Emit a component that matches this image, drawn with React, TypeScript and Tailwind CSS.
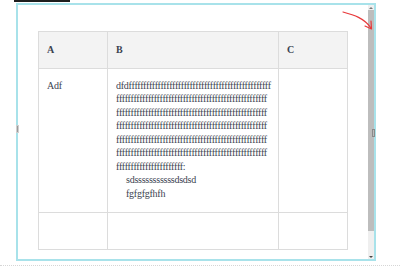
import React from "react";

const fLines = [
  "dfd" + "f".repeat(49),
  "f".repeat(52),
  "f".repeat(52),
  "f".repeat(52),
  "f".repeat(52),
  "f".repeat(52),
  "f".repeat(23) + ":",
];

export default function App() {
  return (
    <div
      className="relative w-[400px] h-[270px] bg-white overflow-hidden"
      style={{ fontFamily: '"Liberation Serif", "DejaVu Serif", serif' }}
    >
      {/* toolbar stub */}
      <div className="ml-[14px] w-[56px] h-[2px] bg-[#1e1e1e]" />

      {/* editor frame */}
      <div className="relative mt-[1px] ml-[16px] w-[360px] h-[258px] border-2 border-[#a8e2ea] flex">
        <div className="flex-1 pt-[26px] pl-[20px]">
          <table className="border-collapse text-[10px] leading-[13.5px] text-[#3b4350] tracking-[-0.25px]">
            <colgroup>
              <col className="w-[69px]" />
              <col className="w-[171px]" />
              <col className="w-[69px]" />
            </colgroup>
            <thead>
              <tr className="bg-[#f3f3f3]">
                <th className="border border-[#dcdcdc] px-[8px] py-[11px] text-left font-bold">A</th>
                <th className="border border-[#dcdcdc] px-[8px] py-[11px] text-left font-bold">B</th>
                <th className="border border-[#dcdcdc] px-[8px] py-[11px] text-left font-bold">C</th>
              </tr>
            </thead>
            <tbody>
              <tr>
                <td className="border border-[#dcdcdc] px-[8px] pt-[10px] pb-[12px] align-top">Adf</td>
                <td className="border border-[#dcdcdc] pl-[8px] pr-[6px] pt-[10px] pb-[12px] align-top">
                  {fLines.map((line, i) => (
                    <div key={i} className="whitespace-nowrap overflow-hidden">
                      {line}
                    </div>
                  ))}
                  <div className="pl-[10px]">sdsssssssssssdsdsd</div>
                  <div className="pl-[10px]">fgfgfgfhfh</div>
                </td>
                <td className="border border-[#dcdcdc] px-[8px] py-[11px] align-top" />
              </tr>
              <tr>
                <td className="border border-[#dcdcdc] px-[8px] py-[11px]">&nbsp;</td>
                <td className="border border-[#dcdcdc] px-[8px] py-[11px]" />
                <td className="border border-[#dcdcdc] px-[8px] py-[11px]" />
              </tr>
            </tbody>
          </table>
        </div>

        {/* vertical scrollbar */}
        <div className="w-[6px] flex flex-col bg-[#efefef]">
          <div className="h-[5px] flex items-center justify-center">
            <div className="w-0 h-0 border-l-[2px] border-r-[2px] border-b-[2px] border-l-transparent border-r-transparent border-b-[#777]" />
          </div>
          <div className="h-[221px] bg-[#bdbdbd]" />
          <div className="flex-1" />
          <div className="h-[5px] flex items-center justify-center">
            <div className="w-0 h-0 border-l-[2px] border-r-[2px] border-t-[2px] border-l-transparent border-r-transparent border-t-[#444]" />
          </div>
        </div>

        {/* resize handles */}
        <div className="absolute left-[-2px] top-[120px] w-[3px] h-[8px] bg-[#9a9a9a] border border-[#cfcfcf]" />
        <div className="absolute right-[-1px] top-[124px] w-[3px] h-[8px] bg-[#bcbcbc] border border-[#8a8a8a]" />
      </div>

      {/* dotted rule */}
      <div className="mt-[4px] border-t border-dotted border-[#d6d6d6]" />

      {/* annotation arrow */}
      <svg
        className="absolute left-[340px] top-[8px]"
        width="40"
        height="26"
        viewBox="0 0 40 26"
        fill="none"
      >
        <path
          d="M3 4 C 14 7, 24 10, 31 20"
          stroke="#e8383a"
          strokeWidth="1.2"
          strokeLinecap="round"
        />
        <path
          d="M25 18 L31.5 21 L31 13"
          stroke="#e8383a"
          strokeWidth="1.2"
          strokeLinecap="round"
          strokeLinejoin="round"
        />
      </svg>
    </div>
  );
}
